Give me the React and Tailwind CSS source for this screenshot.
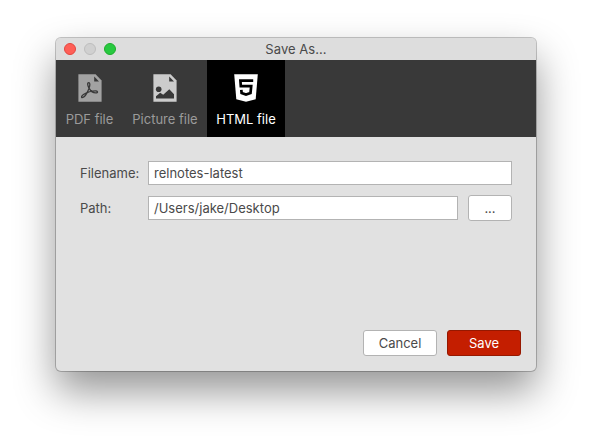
function PdfIcon() {
  return (
    <svg width="24" height="28" viewBox="0 0 24 28" className="block text-[#a2a2a2]">
      <path fill="currentColor" d="M.4 .3H17.6L23.6 6.6V27.7H.4Z" />
      <path fill="#393939" d="M16.2 2.6V7.4H21Z" />
      <path
        fill="none"
        stroke="#393939"
        strokeWidth="1.3"
        strokeLinejoin="round"
        d="M10.7 8.6C9.1 8.7 9.5 11.3 11 14.1C12.8 17.2 15.9 19.3 18.6 18.9C20.2 18.5 19.6 16.8 17.6 16.8C14.1 16.8 9.5 17.9 5.9 20.3C3.3 22 3 23.6 4.3 23.6C6.5 23.5 9.5 18.5 11 14.4C12.1 11.3 12.2 8.6 10.7 8.6Z"
      />
    </svg>
  );
}

function PictureIcon() {
  return (
    <svg width="24" height="28" viewBox="0 0 24 28" className="block text-[#cccccc]">
      <path fill="currentColor" d="M.4 .3H17.6L23.6 6.6V27.7H.4Z" />
      <path fill="#393939" d="M16.2 2.6V7.4H21Z" />
      <circle cx="5.7" cy="15.2" r="2.8" fill="#393939" />
      <path fill="#393939" d="M3 24.4V22.2L7.2 18.8L10.2 20.8L16.3 15.2L21 20.2V24.4Z" />
    </svg>
  );
}

function HtmlIcon() {
  return (
    <svg width="24" height="28" viewBox="0 0 24 28" className="block">
      <path fill="#fff" d="M.2 .2H23.8L21.7 25.2L12 27.7L2.3 25.2Z" />
      <path
        fill="none"
        stroke="#000"
        strokeWidth="2.7"
        d="M19.2 6.6H6.4L6.8 12.2H17.2L16.5 19L12 20.5L7.6 19L7.3 15.8"
      />
    </svg>
  );
}

function Tab({ icon, label, className }) {
  return (
    <div className={"flex h-full flex-col items-center pt-[14px] " + className}>
      {icon}
      <span className="mt-[9px] whitespace-nowrap leading-4">{label}</span>
    </div>
  );
}

export default function App() {
  return (
    <div className="h-[445px] w-[592px] overflow-hidden bg-white px-14 pt-[38px] font-['Inter',sans-serif] text-[13px] leading-4 text-[#4a4a4a]">
      <div className="flex h-[333px] w-[480px] flex-col overflow-hidden rounded-[5px] bg-[#e1e1e1] shadow-[0_0_0_1px_rgba(0,0,0,0.22),0_20px_40px_rgba(0,0,0,0.42)]">
        <header className="grid h-[22px] shrink-0 grid-cols-[1fr_auto_1fr] items-center bg-[#dddddd]">
          <div className="flex gap-2 pl-2">
            <span className="size-3 rounded-full border border-[#e2463f] bg-[#ff5f57]" />
            <span className="size-3 rounded-full border border-[#bdbdbd] bg-[#d0d0d0]" />
            <span className="size-3 rounded-full border border-[#1dad2b] bg-[#28c940]" />
          </div>
          <span className="tracking-[0.05px]">Save As...</span>
        </header>
        <nav className="flex h-[77px] shrink-0 bg-[#393939] text-[#9b9b9b]">
          <Tab icon={<PdfIcon />} label="PDF file" className="w-[67px]" />
          <Tab icon={<PictureIcon />} label="Picture file" className="w-[84px]" />
          <Tab icon={<HtmlIcon />} label="HTML file" className="w-[78px] bg-black text-white" />
        </nav>
        <main className="flex flex-1 flex-col pr-[15px] pb-[15px] pl-6 pt-6">
          <div className="flex h-6 items-center">
            <label className="w-[68px]">Filename:</label>
            <div className="flex h-6 w-[364px] items-center border border-[#b3b3b3] bg-white pl-[5px]">relnotes-latest</div>
          </div>
          <div className="mt-[10px] flex h-[26px] items-center">
            <label className="w-[68px]">Path:</label>
            <div className="flex h-6 w-[310px] items-center border border-[#b3b3b3] bg-white pl-[5px]">/Users/jake/Desktop</div>
            <button className="ml-[10px] h-[26px] w-11 rounded-[3px] border border-[#b3b3b3] bg-white">...</button>
          </div>
          <div className="mt-auto flex justify-end gap-[10px]">
            <button className="h-[26px] w-[74px] rounded-[3px] border border-[#b3b3b3] bg-white">Cancel</button>
            <button className="h-[26px] w-[74px] rounded-[3px] border border-[#961800] bg-[#c41e00] text-white">Save</button>
          </div>
        </main>
      </div>
    </div>
  );
}
